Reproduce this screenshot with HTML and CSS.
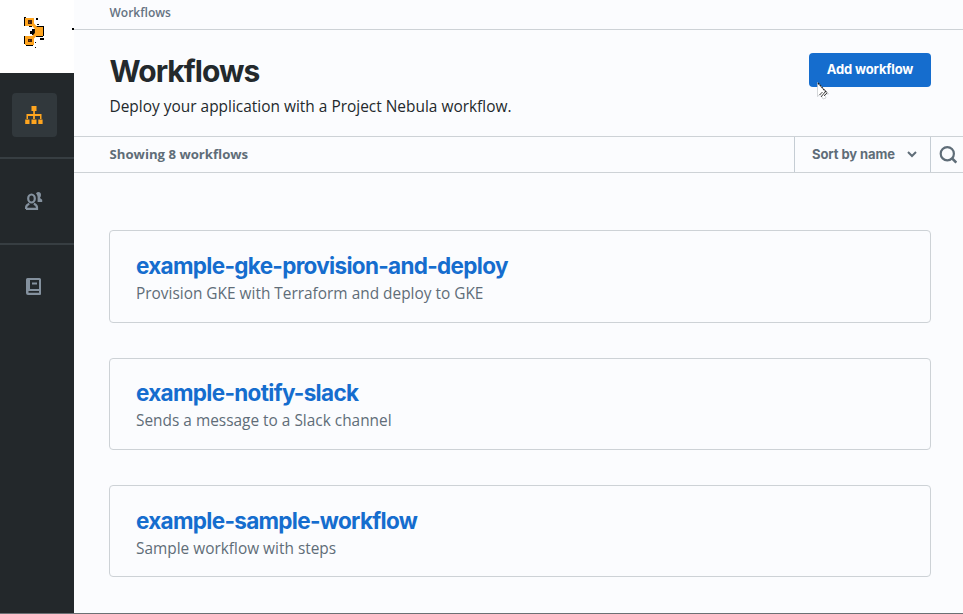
FILE: index.html
```html
<!DOCTYPE html>
<html lang="en">
<head>
<meta charset="utf-8">
<title>Workflows</title>
<link rel="stylesheet" href="styles.css">
</head>
<body>
<div class="app">
  <aside class="sidebar">
    <a class="logo">
      <svg width="22" height="33" viewBox="0 0 22 33">
        <path fill="#000" shape-rendering="crispEdges" d="M0 1h2v3H0zM0 4h1v6H0zM0 9h4v1H0zM12 2h2v2h-2zM5 10h3v1H5zM8 13h3v6H8zM6 15h3v3H6zM13 8h2v1h-2zM12 10h7v1h-7zM19 10h1v10h-1zM12 20h7v1h-7zM16 22h4v2h-4zM0 20h2v2H0zM0 22h1v6H0zM2 29h7v1H2zM11 26h1v1h-1zM11 31h1v1h-1z"/>
        <path fill="none" stroke="#ffa51f" stroke-width="3.200" d="M8.500 8l4 4.500v5l-4 4.500"/>
        <path fill="#ffa51f" d="M1 2h9v8H1zM1 20h9v9H1zM12 11h7v9h-7z"/>
        <path fill="#44200d" shape-rendering="crispEdges" d="M4 4h4v4H4zM4 23h4v3H4z"/>
        <path fill="#8a5210" shape-rendering="crispEdges" d="M5 6h1v1H5zM5 24h1v1H5z"/>
      </svg>
    </a>
    <nav class="nav">
      <a class="nav-item"><span class="nav-tile active">
        <svg width="18" height="18" viewBox="0 0 18 18" fill="#ffa51f"><path d="M6.500 0h5v5h-5zM8.200 5h1.700v3h-1.700zM1.500 8h15v5H15V10H9.900v3H8.100v-3H3v3H1.500zM.2 13.500h4.300V18H.2zM6.500 13.500h5V18h-5zM13.300 13.500H17.600V18H13.300z"/></svg>
      </span></a>
      <a class="nav-item"><span class="nav-tile">
        <svg width="18" height="18" viewBox="0 0 18 18"><g fill="none" stroke="#84919e" stroke-width="2.200"><ellipse cx="6.500" cy="6.500" rx="3.300" ry="4"/><path d="M1.100 16.900v-1.400c0-2.200 2-3.200 3.200-3.700M8.800 11.800c1.600.6 3.200 1.700 3.200 3.700v1.400H1"/></g><path fill="#84919e" d="M11 1.200C13-.8 16-.1 16 2.800c0 1.600-.6 2.400-1 3.200l2.200 1.800V10h-4.600V5c-.2-1.500-.7-2.500-1.600-3.800z"/></svg>
      </span></a>
      <a class="nav-item book"><span class="nav-tile">
        <svg width="15" height="17" viewBox="0 0 15 17"><path fill="#84919e" fill-rule="evenodd" d="M1.500 0h12A1.500 1.500 0 0 1 15 1.500V16a1 1 0 0 1-1 1H2a2 2 0 0 1-2-2V1.500A1.500 1.500 0 0 1 1.500 0zM4 2h9v9H4zM2.500 13H13v1.700H2.500z"/><path fill="#84919e" d="M6 4.500h5v2H6z"/></svg>
      </span></a>
    </nav>
  </aside>
  <main class="main">
    <div class="breadcrumb">Workflows</div>
    <header class="header">
      <div>
        <h1>Workflows</h1>
        <p>Deploy your application with a Project Nebula workflow.</p>
      </div>
      <button class="add">Add workflow</button>
    </header>
    <div class="toolbar">
      <div class="count">Showing 8 workflows</div>
      <div class="sort"><span>Sort by name</span>
        <svg width="10" height="7" viewBox="0 0 10 7" fill="none" stroke="#5f6d78" stroke-width="2"><path d="M1 1l4 4 4-4"/></svg>
      </div>
      <div class="search">
        <svg width="18" height="18" viewBox="0 0 18 18" fill="none" stroke="#5f6d78" stroke-width="2.200"><circle cx="8.300" cy="7.700" r="6.600"/><path d="M12.800 12.200l4.500 4.500" stroke-width="2.600"/></svg>
      </div>
    </div>
    <section class="list">
      <article class="card first"><h2>example-gke-provision-and-deploy</h2><p>Provision GKE with Terraform and deploy to GKE</p></article>
      <article class="card"><h2>example-notify-slack</h2><p>Sends a message to a Slack channel</p></article>
      <article class="card last"><h2>example-sample-workflow</h2><p>Sample workflow with steps</p></article>
    </section>
  </main>
</div>
<div class="tick"></div>
<svg class="cursor" width="12" height="19" viewBox="0 0 12 19"><path fill="#fff" stroke="#b8bcc0" stroke-width=".6" d="M.5.5v14l3-2.500 2.500 5 3-1-1.500-4h4z"/><path d="M1 1l9 10" stroke="#222" stroke-width="1.200" stroke-dasharray="2 .6"/><path d="M2.500 13l3-3M4 15l4-5M7 14l3-3" stroke="#444" stroke-width="1"/></svg>
</body>
</html>
```
FILE: styles.css
```css
* { box-sizing: border-box; }
body {
  margin: 0;
  height: 614px;
  overflow: hidden;
  background: #fbfcfe;
  font-family: "Open Sans", "Noto Sans", sans-serif;
  color: #23292c;
}
h1, h2, p { margin: 0; white-space: nowrap; }
h1, h2 { font-family: Inter, Roboto, sans-serif; font-weight: 700; }
svg { display: block; }
.app { display: flex; height: 614px; border-bottom: 1px solid #6b7074; }
.sidebar { width: 74px; flex: none; background: #23282b; }
.logo { display: block; height: 73px; padding: 16px 0 0 24px; background: #fff; }
.nav-item { display: flex; height: 86px; padding: 20px 0 0 12px; border-bottom: 2px solid #373e42; }
.nav-item:last-child { border-bottom: 0; }
.nav-tile {
  display: flex;
  align-items: center;
  justify-content: center;
  width: 45px;
  height: 44px;
  padding-right: 2px;
  border-radius: 4px;
}
.book .nav-tile { height: 43px; }
.active { background: #31383c; }
.main { flex: 1; min-width: 0; }
.breadcrumb {
  height: 30px;
  padding-left: 35.5px;
  border-bottom: 1px solid #cdd2d6;
  font-size: 12px;
  font-weight: 600;
  line-height: 25px;
  color: #657382;
}
.header {
  display: flex;
  justify-content: space-between;
  height: 107px;
  padding: 23px 32px 0 35.5px;
  border-bottom: 1px solid #cdd2d6;
}
.header h1 { font-size: 30px; line-height: 36px; letter-spacing: -0.95px; }
.header p { margin-top: 5px; font-size: 15.44px; line-height: 24px; }
.add {
  width: 122px;
  height: 34px;
  padding: 0 0 1px;
  border: 0;
  border-radius: 4px;
  background: #156dce;
  color: #fff;
  font: 700 13px/31px Inter, sans-serif;
  letter-spacing: -0.15px;
}
.toolbar {
  display: flex;
  height: 36px;
  border-bottom: 1px solid #cdd2d6;
  color: #5f6d78;
  font-size: 13.2px;
  font-weight: 700;
  line-height: 34px;
}
.count { flex: 1; padding-left: 35.5px; }
.sort {
  display: flex;
  align-items: center;
  justify-content: space-between;
  width: 136px;
  padding: 0 13px 0 17px;
  border-left: 1px solid #c5cdd4;
  font-family: Inter, sans-serif;
  font-size: 13px;
  letter-spacing: -0.08px;
}
.sort span { padding-bottom: 2px; }
.search { display: flex; align-items: center; width: 33px; padding-left: 8px; border-left: 1px solid #c5cdd4; }
.list { display: flex; flex-direction: column; gap: 35px; padding: 57px 32px 0 35px; }
.card { height: 92px; padding: 19px 26px; border: 1px solid #cdd2d6; border-radius: 4px; }
.first, .last { padding-top: 20px; }
.first { height: 93px; }
.card h2 { font-size: 22.5px; line-height: 30px; letter-spacing: -0.69px; color: #156dce; }
.card p { margin-top: 1px; font-size: 15.42px; line-height: 24px; color: #5f6d78; }
.tick { position: absolute; left: 72px; top: 28px; width: 2px; height: 2px; background: #000; }
.cursor { position: absolute; left: 817px; top: 82px; }
```
